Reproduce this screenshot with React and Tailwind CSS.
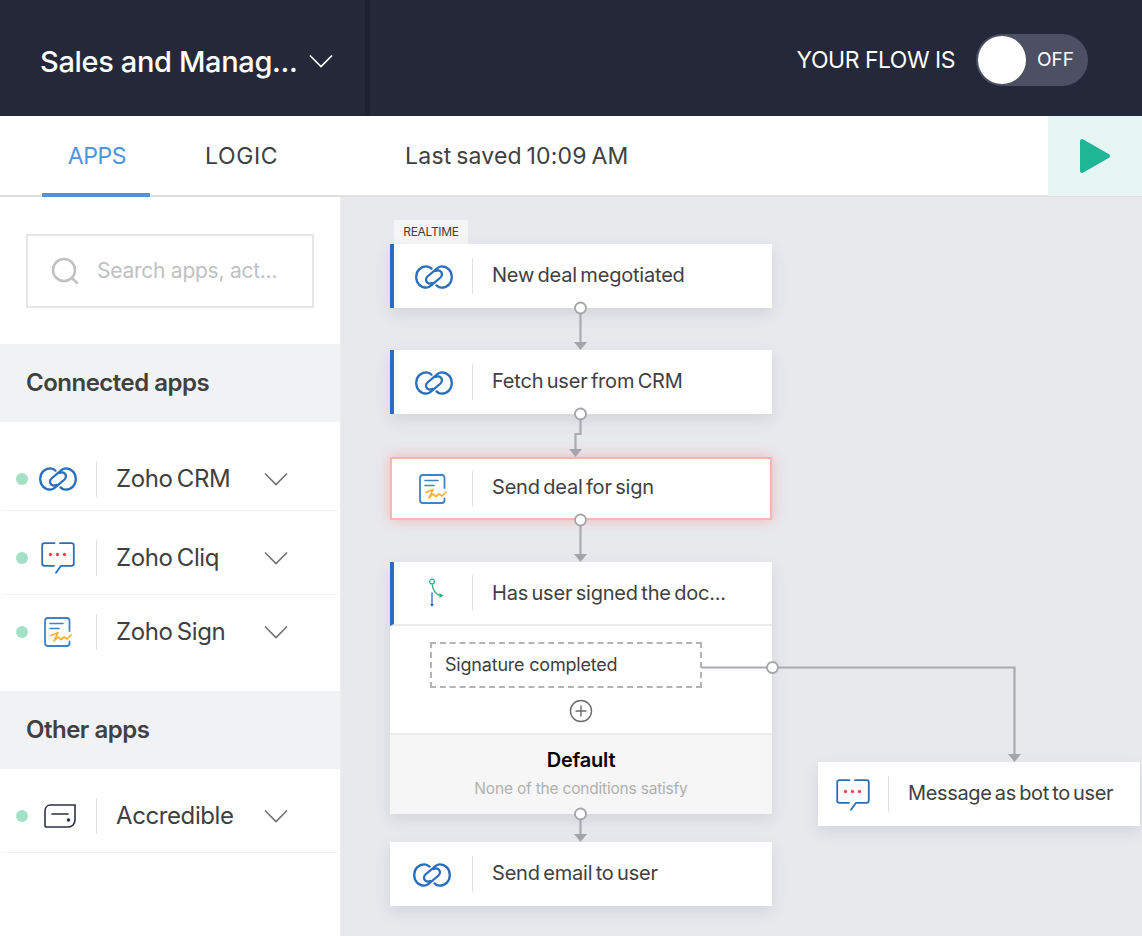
const font = { fontFamily: "Inter, 'Noto Sans', sans-serif" };

const Chevron = ({ className }) => (
  <svg className={className} width="24" height="14" viewBox="0 0 24 14" fill="none" stroke="currentColor" strokeWidth="1.6">
    <path d="M1 1.5L12 12.5L23 1.5" />
  </svg>
);

const CrmIcon = () => (
  <svg width="38" height="24" viewBox="0 0 38 24" fill="none" stroke="#2a6fbb" strokeWidth="2.3" strokeLinecap="round">
    <path d="M16.5 3.6C15 2.1 13.5 1.3 11.5 1.3C5.5 1.3 1.2 6 1.2 12C1.2 18 5.5 22.7 11.5 22.7C13.5 22.7 15 21.6 16.5 20.2L25.5 12.5C27.5 10.6 27.4 8 25.6 6.4C24.2 5.3 22.3 5.2 20.8 6" />
    <path d="M21.5 20.4C23 21.9 24.5 22.7 26.5 22.7C32.5 22.7 36.8 18 36.8 12C36.8 6 32.5 1.3 26.5 1.3C24.5 1.3 23 2.4 21.5 3.8L12.5 11.5C10.5 13.4 10.6 16 12.4 17.6C13.8 18.7 15.7 18.8 17.2 18" />
  </svg>
);

const CliqIcon = () => (
  <svg width="34" height="32" viewBox="0 0 34 32" fill="none" stroke="#2a6fbb" strokeWidth="1.8" strokeLinecap="round" strokeLinejoin="round">
    <path d="M13.5 1.2H3.5C2.2 1.2 1.2 2.2 1.2 3.5V21.5C1.2 22.8 2.2 23.8 3.5 23.8H13" />
    <path d="M15 30.8L20 23.8H30.5C31.8 23.8 32.8 22.8 32.8 21.5V3.5C32.8 2.2 31.8 1.2 30.5 1.2H19" />
    <circle cx="9.5" cy="12.5" r="1.7" fill="#f0474b" stroke="none" />
    <circle cx="16.5" cy="12.5" r="1.7" fill="#f0474b" stroke="none" />
    <circle cx="23.5" cy="12.5" r="1.7" fill="#f0474b" stroke="none" />
  </svg>
);

const SignIcon = () => (
  <svg width="28" height="30" viewBox="0 0 28 30" fill="none">
    <path d="M25.5 14V4C25.5 2.3 24.7 1 23 1H4C2.3 1 1 2.3 1 4V26C1 27.7 2.3 29 4 29H23C24.7 29 25.5 27.7 25.5 26V24.5" stroke="#3f83c6" strokeWidth="1.8" strokeLinecap="round" />
    <path d="M6 6.5H19M6 11.5H15" stroke="#3f83c6" strokeWidth="1.6" strokeLinecap="round" />
    <path d="M7 18.5L14 15.5L10 24L14 20L17 22.5L20 20L23 22L27 18" stroke="#f5b32f" strokeWidth="1.7" strokeLinecap="round" strokeLinejoin="round" />
  </svg>
);

const CardIcon = () => (
  <svg className="ml-[3px]" width="32" height="24" viewBox="0 0 32 24" fill="none">
    <path d="M6.5 1H31V16C31 20 28 23 24.5 23H2.5C1.6 23 1 22.4 1 21.5V7C1 3.5 3.2 1 6.5 1Z" stroke="#2c3145" strokeWidth="1.6" />
    <path d="M8 10H24" stroke="#2c3145" strokeWidth="1.6" strokeLinecap="round" />
    <circle cx="24.5" cy="16" r="1.8" fill="#2c3145" />
  </svg>
);

const LogicIcon = () => (
  <svg className="ml-2" width="16" height="30" viewBox="0 0 16 30" fill="none">
    <circle cx="3" cy="3.5" r="2.4" stroke="#2fae85" strokeWidth="1.2" />
    <path d="M3.2 6C3.5 12 7 16.5 11 17.5" stroke="#2fae85" strokeWidth="1.4" />
    <path d="M10.5 15L14.5 17.8L10.5 20Z" fill="#2fae85" />
    <path d="M3 14.5V26.5" stroke="#2a6fbb" strokeWidth="1.3" />
    <path d="M1 26H5L3 29Z" fill="#2a6fbb" />
  </svg>
);

const apps = [
  { name: "Zoho CRM", icon: <CrmIcon /> },
  { name: "Zoho Cliq", icon: <CliqIcon /> },
  { name: "Zoho Sign", icon: <SignIcon /> },
];

const AppRow = ({ name, icon, h, line = true }) => (
  <div className={`flex items-center ${h} ml-0.5 mr-0.5 ${line ? "border-b border-[#f3f3f3]" : ""}`}>
    <span className="ml-3.5 h-3 w-3 rounded-full bg-[#a3e0c5]" />
    <span className="ml-[4px] flex w-[52px] justify-center">{icon}</span>
    <span className="ml-[12px] h-9 w-px bg-[#e2e2e2]" />
    <span className="ml-[19px] w-[148px] text-[24px] leading-none tracking-[-0.4px] text-[#404040] [word-spacing:-2px]">{name}</span>
    <Chevron className="text-[#707070]" />
  </div>
);

const Node = ({ pos, icon, text, iconW = "w-[82px]", textCls = "tracking-[-0.2px]", bar = true, red = false }) => (
  <div className={`absolute flex items-center bg-white ${pos} ${red ? "border-2 border-[#ffb4b4] shadow-[0_0_12px_rgba(255,120,120,0.45)]" : "shadow-[0_6px_14px_rgba(90,95,115,0.14)]"} ${bar ? "border-l-[4px] border-l-[#2a6cc4]" : ""}`}>
    <span className={`flex justify-center pl-[1px] pt-[1px] ${iconW}`}>{icon}</span>
    <span className="h-9 w-px bg-[#e2e2e2]" />
    <span className={`ml-[19px] whitespace-nowrap text-[20px] leading-none text-[#404040] [word-spacing:-2px] ${textCls} ${red ? "pb-[3px]" : "pb-[2px]"}`}>{text}</span>
  </div>
);

const Connectors = () => (
  <svg className="absolute left-0 top-0" width="801" height="739" fill="none">
    <g stroke="#a9abb0" strokeWidth="2.2">
      <path d="M239.5 111V147" />
      <path d="M239.5 217V237H234.5V255" />
      <path d="M239.5 323V359" />
      <path d="M361 470.5H673.5V559" />
      <path d="M239.5 617V639" />
    </g>
    <g fill="#a3a5aa">
      <path d="M233 145H246L239.5 153Z" />
      <path d="M228 252H241L234.5 260Z" />
      <path d="M233 357H246L239.5 365Z" />
      <path d="M667 557H680L673.5 565Z" />
      <path d="M233 637H246L239.5 645Z" />
    </g>
    <g fill="#fff" stroke="#a3a5aa" strokeWidth="1.8">
      <circle cx="239.5" cy="111" r="5.5" />
      <circle cx="239.5" cy="217" r="5.5" />
      <circle cx="239.5" cy="323" r="5.5" />
      <circle cx="431.5" cy="470.5" r="5.5" />
      <circle cx="239.5" cy="617" r="5.5" />
    </g>
  </svg>
);

export default function App() {
  return (
    <div className="flex h-[936px] w-[1142px] flex-col overflow-hidden bg-white" style={font}>
      {/* top bar */}
      <header className="flex h-[116px] shrink-0 items-center bg-[#252839]">
        <div className="flex h-full w-[370px] items-center border-r-[5px] border-[#1e2130] pl-10 pt-[6px]">
          <span className="text-[29px] font-medium leading-none tracking-[-0.35px] text-white">Sales and Manag...</span>
          <Chevron className="ml-[12px] text-white" />
        </div>
        <div className="ml-auto mr-[54px] flex items-center pt-1">
          <span className="text-[23px] tracking-[-0.5px] text-white">YOUR FLOW IS</span>
          <div className="ml-[21px] flex h-[52px] w-[112px] items-center rounded-full bg-[#4d5063] pl-[2px]">
            <span className="h-12 w-12 rounded-full bg-white" />
            <span className="ml-[11px] text-[19px] text-white">OFF</span>
          </div>
        </div>
      </header>

      {/* tabs */}
      <div className="flex h-[81px] shrink-0 border-b-2 border-[#dfdfe3] bg-white">
        <div className="ml-[42px] flex h-[81px] w-[108px] items-center justify-center border-b-[4px] border-[#4f94e0] pl-[2px] pt-[4px] text-[23px] tracking-[-0.4px] text-[#4f94e0]">APPS</div>
        <div className="ml-[55px] flex items-center pt-[1px] text-[23px] tracking-[0.6px] text-[#404040]">LOGIC</div>
        <div className="ml-[127px] flex items-center pt-[1px] text-[23px] tracking-[0.2px] text-[#404040] [word-spacing:-2px]">Last saved 10:09 AM</div>
        <div className="ml-auto flex h-[80px] w-[94px] items-center justify-center bg-[#e8f5f5]">
          <svg width="32" height="36" viewBox="0 0 32 36">
            <path d="M3 3L29 18L3 33Z" fill="#1fb696" stroke="#1fb696" strokeWidth="4" strokeLinejoin="round" />
          </svg>
        </div>
      </div>

      <div className="flex min-h-0 flex-1">
        {/* sidebar */}
        <aside className="w-[341px] shrink-0 border-r border-[#eeeeee] bg-white">
          <div className="ml-[26px] mt-[37px] flex h-[74px] w-[288px] items-center border-2 border-[#e6e6e6] pl-[23px]">
            <svg width="28" height="28" viewBox="0 0 28 28" fill="none" stroke="#c2c2c2" strokeWidth="2.6" strokeLinecap="round">
              <circle cx="13" cy="13" r="11" />
              <path d="M21 21L26 26" />
            </svg>
            <span className="ml-[18px] text-[21px] tracking-[-0.25px] text-[#c1c1c1]">Search apps, act...</span>
          </div>
          <div className="mt-[36px] flex h-[78px] items-center bg-[#f1f2f4] pb-[1px] pl-[26px] text-[24px] font-semibold tracking-[-0.5px] text-[#404040]">Connected apps</div>
          <div className="mt-[25px]">
            <AppRow {...apps[0]} h="h-[64px]" />
            <AppRow {...apps[1]} h="mt-[10px] h-[74px]" />
            <AppRow {...apps[2]} h="h-[74px]" line={false} />
          </div>
          <div className="mt-[22px] flex h-[78px] items-center bg-[#f1f2f4] pb-[1px] pl-[26px] text-[24px] font-semibold tracking-[-0.5px] text-[#404040]">Other apps</div>
          <div className="mt-[10px]">
            <AppRow name="Accredible" icon={<CardIcon />} h="h-[74px]" />
          </div>
        </aside>

        {/* flow canvas */}
        <main className="relative min-w-0 flex-1 overflow-hidden bg-[#e8e9ed]">
          <span className="absolute left-[53px] top-[23px] flex h-6 w-[74px] items-center justify-center bg-[#f5f5f5] text-[12px] tracking-[-0.3px] text-[#404040]">REALTIME</span>
          <Node pos="left-[49px] top-[47px] h-16 w-[382px]" iconW="w-[78px]" icon={<CrmIcon />} text="New deal megotiated" />
          <Node pos="left-[49px] top-[153px] h-16 w-[382px]" iconW="w-[78px]" icon={<CrmIcon />} text="Fetch user from CRM" />
          <Node pos="left-[49px] top-[260px] h-[63px] w-[382px]" iconW="w-[80px]" icon={<SignIcon />} text="Send deal for sign" bar={false} red />

          <div className="absolute left-[49px] top-[365px] w-[382px] bg-white shadow-[0_6px_14px_rgba(90,95,115,0.14)]">
            <div className="flex h-16 items-center border-b-2 border-[#ececec] border-l-[4px] border-l-[#2a6cc4]">
              <span className="flex w-[78px] justify-center"><LogicIcon /></span>
              <span className="h-9 w-px bg-[#e2e2e2]" />
              <span className="ml-[19px] text-[20px] leading-none tracking-[-0.2px] text-[#404040] [word-spacing:-2px]">Has user signed the doc...</span>
            </div>
            <div className="flex h-[109px] flex-col items-center border-b-2 border-[#ececec] pt-[16px]">
              <div className="ml-[-30px] flex h-[46px] w-[272px] items-center border-2 border-dashed border-[#b4b4b4] pb-[2px] pl-[13px] text-[18px] tracking-[-0.2px] text-[#404040]">Signature completed</div>
              <svg className="mt-[11px]" width="24" height="24" viewBox="0 0 24 24" fill="none" stroke="#6c6c6c" strokeWidth="1.4">
                <circle cx="12" cy="12" r="10.5" />
                <path d="M12 6.5V17.5M6.5 12H17.5" />
              </svg>
            </div>
            <div className="flex h-[79px] flex-col items-center bg-[#f6f6f6] pt-[12px]">
              <span className="text-[20px] font-semibold leading-[26px] tracking-[-0.2px] text-black">Default</span>
              <span className="mt-[6px] text-[15.5px] leading-5 tracking-[-0.2px] text-[#b0b0b0]">None of the conditions satisfy</span>
            </div>
          </div>

          <Node pos="left-[49px] top-[645px] h-16 w-[382px]" icon={<CrmIcon />} text="Send email to user" bar={false} />
          <Node pos="left-[477px] top-[565px] h-16 w-[322px]" iconW="w-[70px] pr-[2px]" textCls="tracking-[-0.35px]" icon={<CliqIcon />} text="Message as bot to user" bar={false} />
          <Connectors />
        </main>
      </div>
    </div>
  );
}
